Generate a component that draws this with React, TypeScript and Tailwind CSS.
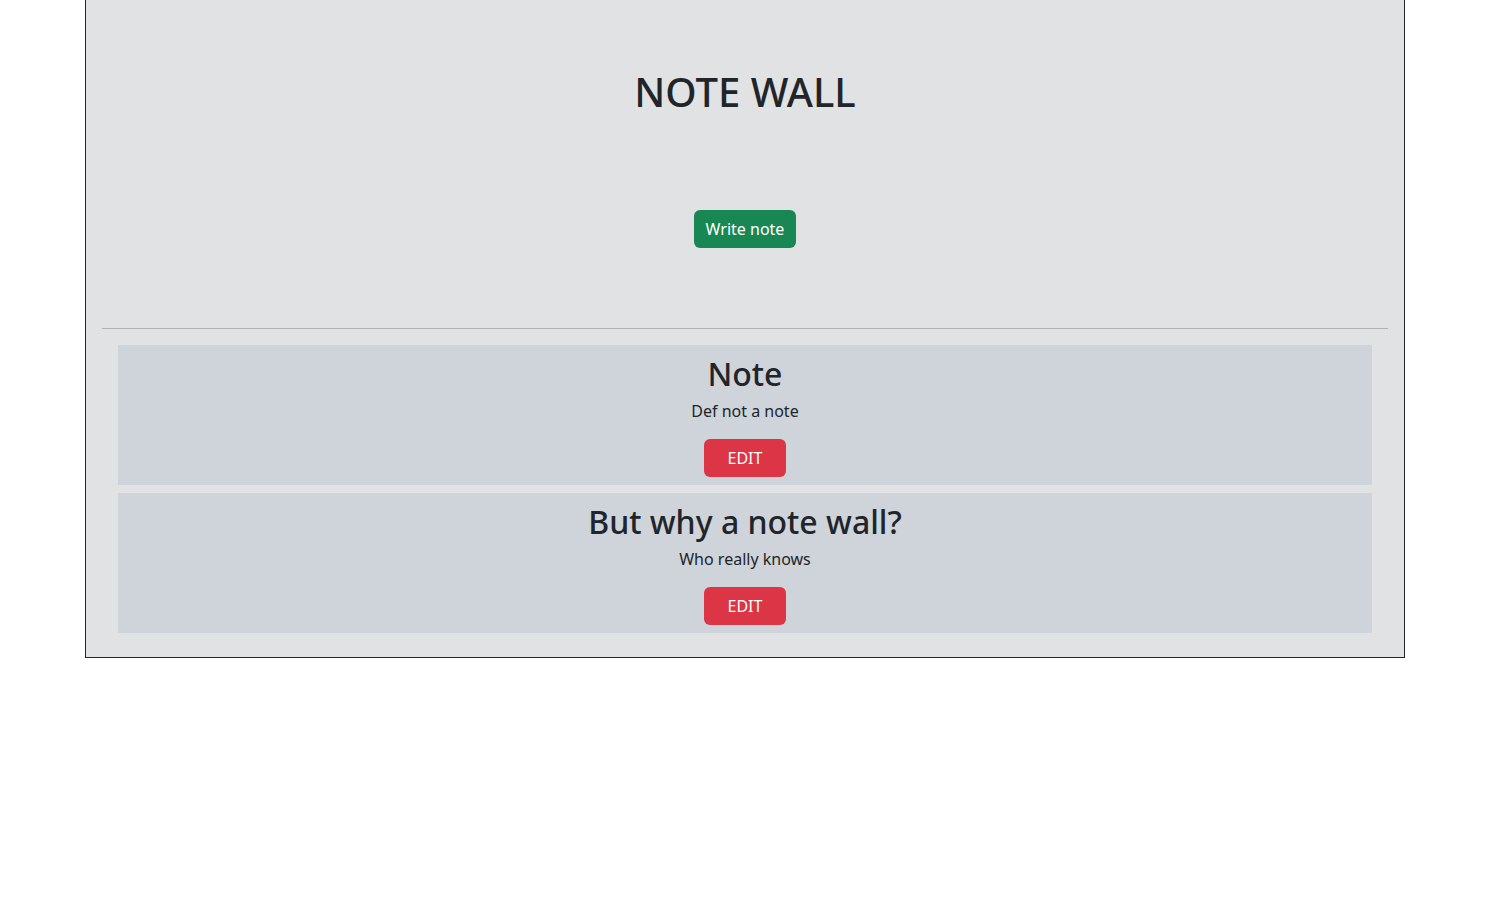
const notes = [
  { title: 'Note', body: 'Def not a note' },
  { title: 'But why a note wall?', body: 'Who really knows' },
]

export default function App() {
  return (
    <div className="min-h-screen bg-white text-[#212529] font-['Noto_Sans',_'Open_Sans',_sans-serif]">
      <div className="ml-[85px] w-[1320px] bg-[#e1e2e4] border-x border-b border-[#212529] px-4 pb-6">
        {/* Header */}
        <div className="flex flex-col items-center pt-[68px] pb-20">
          <h1 className="text-[40px] leading-[48px] font-medium">NOTE WALL</h1>
          <button className="mt-[94px] h-[38px] px-3 rounded-md bg-[#198754] text-white text-base">
            Write note
          </button>
        </div>

        <hr className="border-0 border-t border-[#b1b2b4]" />

        {/* Notes */}
        <div className="px-4 pt-4 flex flex-col gap-2">
          {notes.map((n) => (
            <div key={n.title} className="bg-[#ced4da] p-2 flex flex-col items-center">
              <h2 className="text-[32px] leading-[38px] pt-[2px] mb-[6px] font-medium">{n.title}</h2>
              <p className="text-base leading-6 mb-4">{n.body}</p>
              <button className="h-[38px] w-[82px] rounded-md bg-[#dc3545] text-white text-base">
                EDIT
              </button>
            </div>
          ))}
        </div>
      </div>
    </div>
  )
}
